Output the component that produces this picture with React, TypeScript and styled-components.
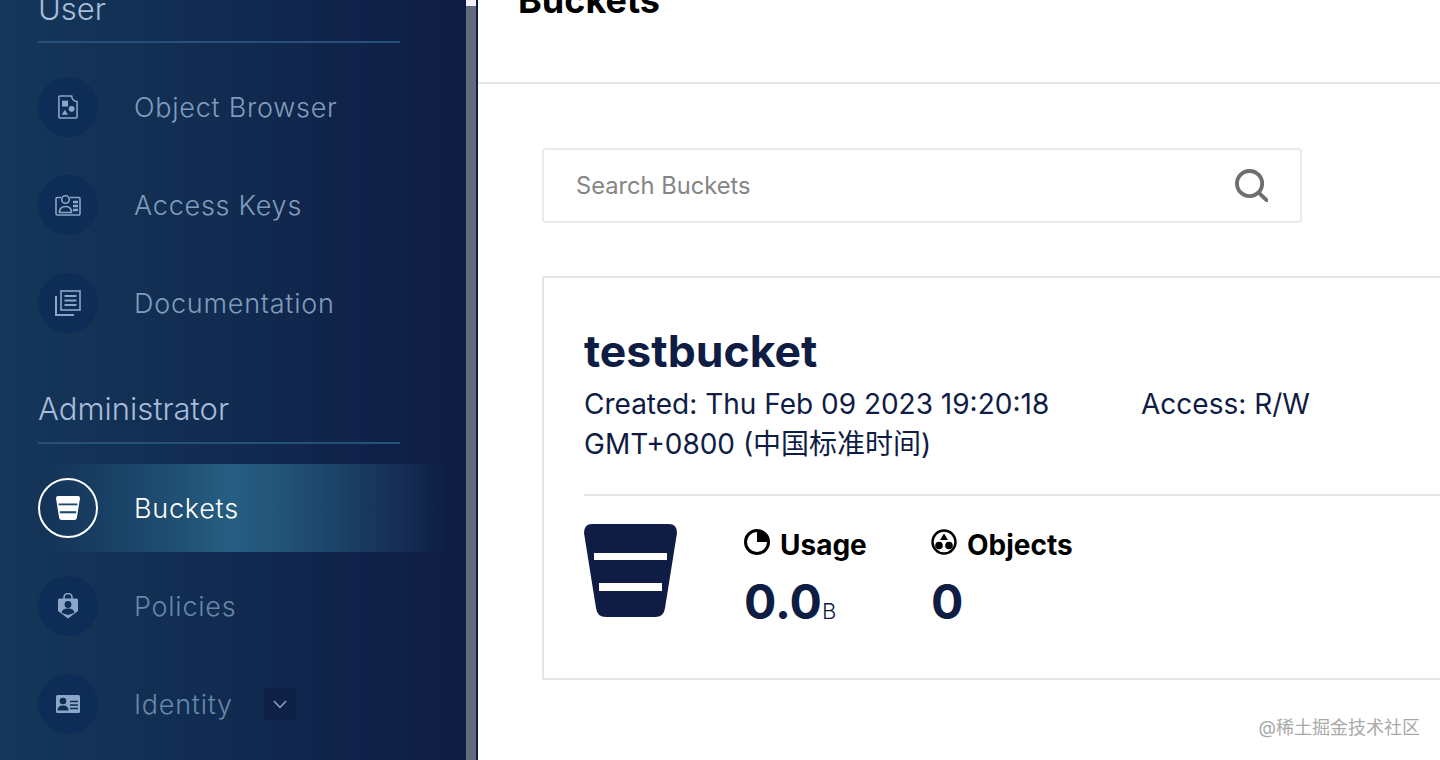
import React from 'react';
import styled, { createGlobalStyle } from 'styled-components';

const NAVY = '#0f1c44';

const GlobalStyle = createGlobalStyle`
    html,
    body {
        margin: 0;
        height: 100%;
        overflow: hidden;
        background: #ffffff;
        font-family: Inter, 'Noto Sans CJK SC', sans-serif;
    }
`;

const Shell = styled.div`
    display: flex;
    height: 760px;
    overflow: hidden;
`;

const Sidebar = styled.aside`
    flex: 0 0 466px;
    background: linear-gradient(90deg, #14375a 0%, #112a50 50%, #0f1c44 100%);
`;

const SidebarInner = styled.div`
    margin-top: -9px;
`;

const SectionHead = styled.div<{ $spaced?: boolean }>`
    margin: ${(p) => (p.$spaced ? '44px' : '0')} 66px 20px 38px;
    padding-bottom: ${(p) => (p.$spaced ? '15px' : '14px')};
    border-bottom: 2px solid #24507a;
    font-size: 31px;
    line-height: 36px;
    font-weight: 300;
    color: #a6bcd9;
`;

const Row = styled.div<{ $active?: boolean }>`
    display: flex;
    align-items: center;
    gap: 36px;
    height: 88px;
    margin-bottom: 10px;
    padding-left: 38px;
    background: ${(p) =>
        p.$active
            ? 'linear-gradient(90deg, rgba(37, 95, 128, 0) 10%, #265f82 50%, rgba(37, 95, 128, 0) 96%)'
            : 'none'};
`;

const IconCircle = styled.div<{ $active?: boolean }>`
    display: flex;
    flex: 0 0 60px;
    align-items: center;
    justify-content: center;
    box-sizing: border-box;
    width: 60px;
    height: 60px;
    border-radius: 50%;
    border: ${(p) => (p.$active ? '2px solid #ffffff' : 'none')};
    background: ${(p) => (p.$active ? 'none' : '#0e2d56')};
    color: ${(p) => (p.$active ? '#ffffff' : '#8ba6c6')};
`;

const RowLabel = styled.span<{ $active?: boolean; $dim?: boolean }>`
    margin-top: 2px;
    font-size: 27px;
    line-height: 36px;
    font-weight: 300;
    letter-spacing: 0.75px;
    color: ${(p) => (p.$active ? '#ffffff' : p.$dim ? '#6787aa' : '#809cbd')};
`;

const Chevron = styled.div`
    display: flex;
    align-items: center;
    justify-content: center;
    width: 32px;
    height: 32px;
    margin-left: -5px;
    background: #0f2047;
    color: #8ba6c6;
`;

const ScrollTrack = styled.div`
    flex: 0 0 10px;
    padding-top: 6px;
    background: #f1f0fa;
`;

const ScrollThumb = styled.div`
    height: 100%;
    background: #5f6a7d;
`;

const Main = styled.main`
    position: relative;
    flex: 1;
    min-width: 0;
    border-left: 2px solid ${NAVY};
    background: #ffffff;
    overflow: hidden;
`;

const PageHeader = styled.header`
    box-sizing: border-box;
    height: 84px;
    padding-left: 40px;
    border-bottom: 2px solid #e5e5e5;
    overflow: hidden;
`;

const PageTitle = styled.h1`
    margin: -20px 0 0;
    font-size: 36px;
    line-height: 40px;
    font-weight: 700;
    color: #000000;
`;

const SearchBox = styled.div`
    display: flex;
    align-items: center;
    justify-content: space-between;
    box-sizing: border-box;
    width: 760px;
    height: 75px;
    margin: 64px 0 0 64px;
    padding: 0 32px 0 32px;
    border: 2px solid #eaeaea;
    border-radius: 4px;
`;

const SearchText = styled.span`
    font-size: 23.7px;
    color: #858585;
`;

const Card = styled.section`
    box-sizing: border-box;
    width: 1100px;
    height: 404px;
    margin: 53px 0 0 64px;
    padding: 47px 0 0 40px;
    border: 2px solid #e5e5e5;
    border-radius: 2px;
`;

const CardTitle = styled.h2`
    margin: 0;
    font-size: 44.5px;
    line-height: 52px;
    font-weight: 700;
    color: ${NAVY};
`;

const MetaRow = styled.div`
    display: flex;
    gap: 90px;
    margin-top: 7px;
    padding-bottom: 30px;
    border-bottom: 2px solid #e5e5e5;
    font-size: 28px;
    line-height: 40px;
    color: ${NAVY};
`;

const MetaCreated = styled.div`
    width: 467px;
`;

const StatsRow = styled.div`
    display: flex;
    align-items: flex-start;
    margin-top: 28px;
`;

const Stat = styled.div<{ $width: number }>`
    flex: 0 0 ${(p) => p.$width}px;
`;

const BucketSlot = styled.div`
    flex: 0 0 160px;
    color: ${NAVY};
`;

const StatLabel = styled.div`
    display: flex;
    align-items: center;
    gap: 10px;
    padding-top: 1px;
    font-size: 28px;
    line-height: 40px;
    font-weight: 700;
    color: #000000;

    svg {
        margin-top: -6px;
    }
`;

const StatValue = styled.div`
    margin-top: 9px;
    font-size: 48px;
    line-height: 56px;
    font-weight: 700;
    color: ${NAVY};
`;

const StatUnit = styled.span`
    font-size: 22px;
    font-weight: 300;
`;

const Watermark = styled.div`
    position: absolute;
    right: 20px;
    bottom: 21px;
    font-size: 18px;
    line-height: 22px;
    color: #a9a9a9;
`;

const BucketIcon = ({ size, bar }: { size: number; bar: string }) => (
    <svg width={size} height={size} viewBox="0 0 93 93" style={{ display: 'block' }}>
        <path
            d="M8 0H85Q93 0 93 9L81 84Q80 93 71 93H22Q13 93 12 84L0 9Q0 0 8 0Z"
            fill="currentColor"
        />
        <rect x="10" y="29" width="73" height="7" fill={bar} />
        <rect x="15" y="59" width="63" height="8" fill={bar} />
    </svg>
);

const ObjectBrowserIcon = () => (
    <svg width="20" height="24" viewBox="0 0 22 26" fill="none">
        <path
            d="M2 1H15A6 6 0 0 0 21 7V24A1 1 0 0 1 20 25H2A1 1 0 0 1 1 24V2A1 1 0 0 1 2 1Z"
            stroke="currentColor"
            strokeWidth="1.7"
        />
        <rect x="4.5" y="6" width="6.5" height="6.5" fill="currentColor" />
        <circle cx="15" cy="15" r="3.2" fill="currentColor" />
        <path d="M7.5 16L11 21.5H4Z" fill="currentColor" />
    </svg>
);

const AccessKeysIcon = () => (
    <svg width="26" height="22" viewBox="0 0 26 22" fill="none" stroke="currentColor" strokeWidth="1.6">
        <path d="M6 3.5H2.5A1.5 1.5 0 0 0 1 5V19.5A1.5 1.5 0 0 0 2.5 21H23.5A1.5 1.5 0 0 0 25 19.5V5A1.5 1.5 0 0 0 23.5 3.5H15" />
        <circle cx="10.5" cy="5.5" r="3.8" />
        <path d="M4.5 18.5C4.5 14 7 12.5 10.5 12.5S16.5 14 16.5 18.5Z" />
        <path d="M18 8H23M18 12H23M18 16H23" strokeWidth="2.4" />
    </svg>
);

const DocumentationIcon = () => (
    <svg width="26" height="26" viewBox="0 0 26 26" fill="none" stroke="currentColor" strokeWidth="1.6">
        <rect x="6" y="1" width="19" height="19" />
        <path d="M9.5 6H21.5M9.5 10.5H21.5M9.5 15H21.5" strokeWidth="2" />
        <path d="M1 6V25H19" strokeWidth="2" />
    </svg>
);

const PoliciesIcon = () => (
    <svg width="20" height="26" viewBox="0 0 20 26">
        <path d="M6 6V4.5A4 4 0 0 1 14 4.5V6" fill="none" stroke="currentColor" strokeWidth="1.6" />
        <path d="M1.5 5.5H18.5A1.5 1.5 0 0 1 20 7V18L10 25.5L0 18V7A1.5 1.5 0 0 1 1.5 5.5Z" fill="currentColor" />
        <circle cx="10" cy="11.5" r="3.4" fill="#0e2d56" />
        <path d="M3.8 20C4 16.5 6.5 15.5 10 15.5S16 16.5 16.2 20L10 22Z" fill="#0e2d56" />
    </svg>
);

const IdentityIcon = () => (
    <svg width="24" height="18" viewBox="0 0 24 18">
        <rect width="24" height="18" rx="1.5" fill="currentColor" />
        <circle cx="7" cy="6" r="3.3" fill="#0e2d56" />
        <path d="M1.5 15.5C1.8 11.5 4 10.5 7 10.5S12.2 11.5 12.5 15.5Z" fill="#0e2d56" />
        <path d="M14 6.5H22M14 10H22M14 13.5H22" stroke="#0e2d56" strokeWidth="1.5" />
    </svg>
);

const ChevronIcon = () => (
    <svg width="14" height="9" viewBox="0 0 14 9" fill="none" stroke="currentColor" strokeWidth="1.5">
        <path d="M1 1L7 7.5L13 1" />
    </svg>
);

const SearchIcon = () => (
    <svg width="33" height="33" viewBox="0 0 34 34" fill="none" stroke="#6f6f6f" strokeWidth="4">
        <circle cx="15" cy="15" r="13" />
        <path d="M24.5 24.5L32.5 32" strokeLinecap="round" />
    </svg>
);

const UsageIcon = () => (
    <svg width="26" height="26" viewBox="0 0 26 26">
        <circle cx="13" cy="13" r="11.5" fill="none" stroke="#000000" strokeWidth="3" />
        <path d="M13 1.5A11.5 11.5 0 0 1 24.5 13H13Z" fill="#000000" />
    </svg>
);

const ObjectsIcon = () => (
    <svg width="26" height="26" viewBox="0 0 26 26">
        <circle cx="13" cy="13" r="11.5" fill="none" stroke="#000000" strokeWidth="2.4" />
        <path d="M13 4.5L17 11H9Z" fill="#000000" />
        <circle cx="8" cy="16.5" r="3.8" fill="#000000" />
        <circle cx="18" cy="16.5" r="3.8" fill="#000000" />
    </svg>
);

const App = () => (
    <Shell>
        <GlobalStyle />
        <Sidebar>
            <SidebarInner>
                <SectionHead>User</SectionHead>
                <Row>
                    <IconCircle>
                        <ObjectBrowserIcon />
                    </IconCircle>
                    <RowLabel>Object Browser</RowLabel>
                </Row>
                <Row>
                    <IconCircle>
                        <AccessKeysIcon />
                    </IconCircle>
                    <RowLabel>Access Keys</RowLabel>
                </Row>
                <Row>
                    <IconCircle>
                        <DocumentationIcon />
                    </IconCircle>
                    <RowLabel>Documentation</RowLabel>
                </Row>
                <SectionHead $spaced>Administrator</SectionHead>
                <Row $active>
                    <IconCircle $active>
                        <BucketIcon size={24} bar="#1a4a6e" />
                    </IconCircle>
                    <RowLabel $active>Buckets</RowLabel>
                </Row>
                <Row>
                    <IconCircle>
                        <PoliciesIcon />
                    </IconCircle>
                    <RowLabel $dim>Policies</RowLabel>
                </Row>
                <Row>
                    <IconCircle>
                        <IdentityIcon />
                    </IconCircle>
                    <RowLabel $dim>Identity</RowLabel>
                    <Chevron>
                        <ChevronIcon />
                    </Chevron>
                </Row>
            </SidebarInner>
        </Sidebar>
        <ScrollTrack>
            <ScrollThumb />
        </ScrollTrack>
        <Main>
            <PageHeader>
                <PageTitle>Buckets</PageTitle>
            </PageHeader>
            <SearchBox>
                <SearchText>Search Buckets</SearchText>
                <SearchIcon />
            </SearchBox>
            <Card>
                <CardTitle>testbucket</CardTitle>
                <MetaRow>
                    <MetaCreated>Created: Thu Feb 09 2023 19:20:18 GMT+0800 (中国标准时间)</MetaCreated>
                    <div>Access: R/W</div>
                </MetaRow>
                <StatsRow>
                    <BucketSlot>
                        <BucketIcon size={93} bar="#ffffff" />
                    </BucketSlot>
                    <Stat $width={187}>
                        <StatLabel>
                            <UsageIcon />
                            Usage
                        </StatLabel>
                        <StatValue>
                            0.0<StatUnit>B</StatUnit>
                        </StatValue>
                    </Stat>
                    <Stat $width={200}>
                        <StatLabel>
                            <ObjectsIcon />
                            Objects
                        </StatLabel>
                        <StatValue>0</StatValue>
                    </Stat>
                </StatsRow>
            </Card>
            <Watermark>@稀土掘金技术社区</Watermark>
        </Main>
    </Shell>
);

export default App;
